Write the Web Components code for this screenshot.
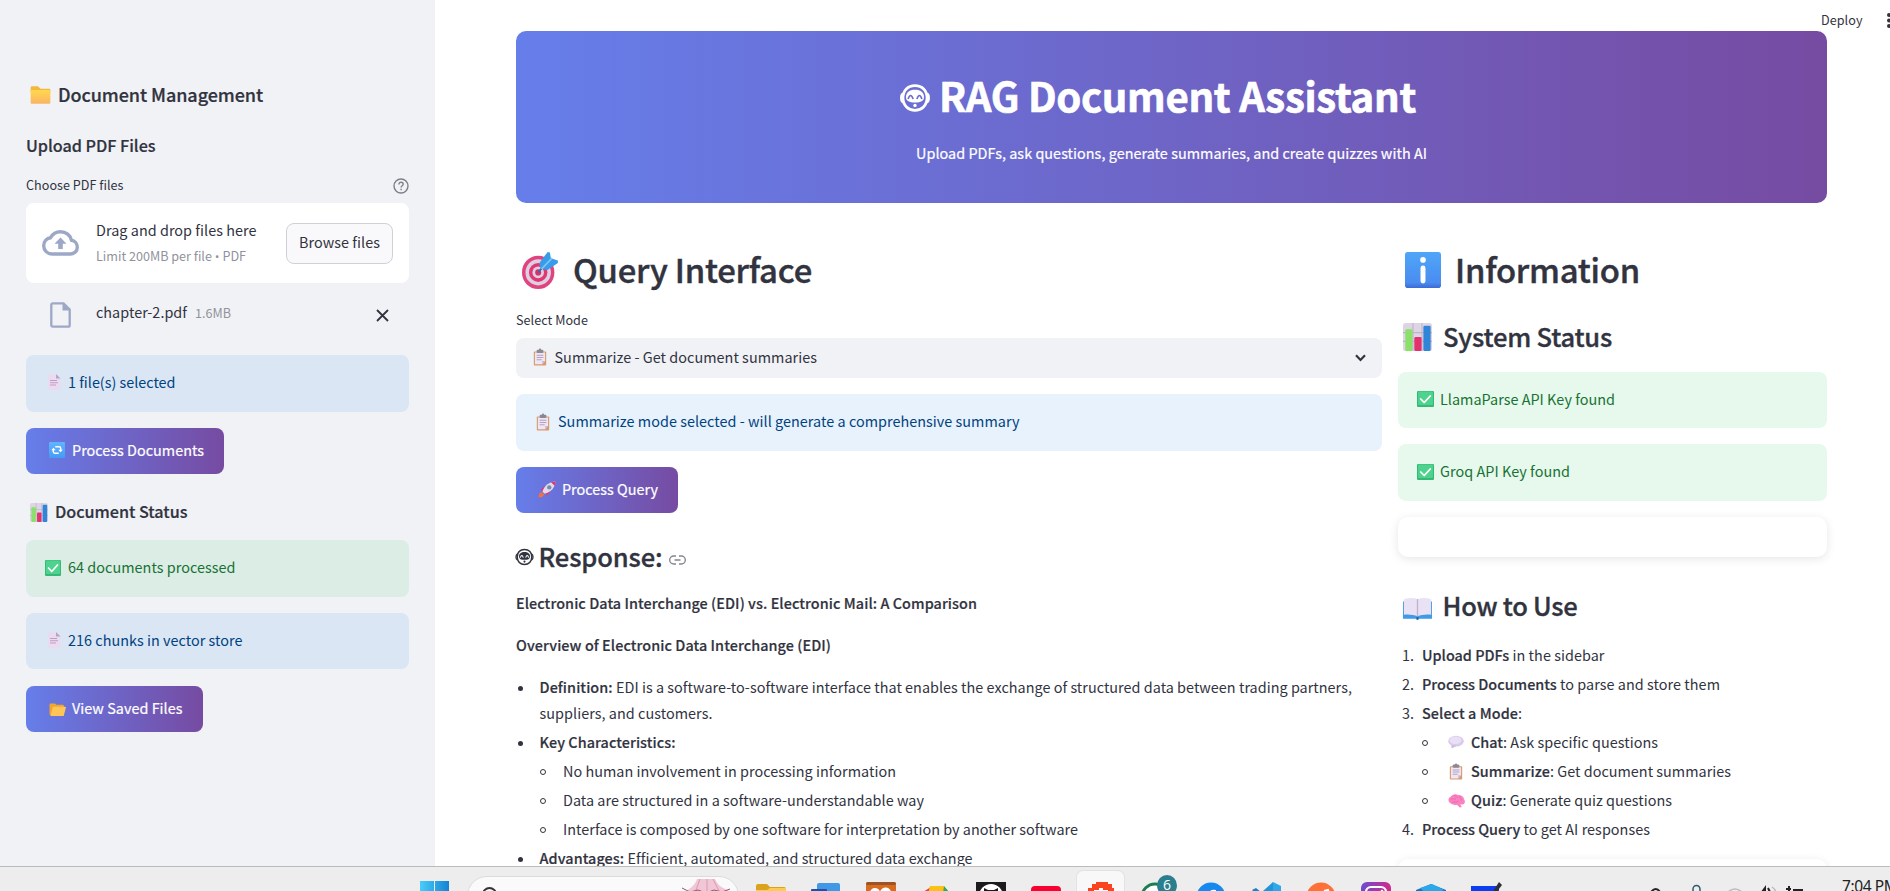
<!DOCTYPE html>
<html lang="en">
<head>
<meta charset="utf-8">
<title>RAG Document Assistant</title>
<style>
html,body{margin:0;height:100%;overflow:hidden;background:#fff}
</style>
</head>
<body>
<rag-app></rag-app>
<script>
const def = (name, css, html, ready) => customElements.define(name, class extends HTMLElement {
  constructor(){ super(); this.attachShadow({mode:'open'}); }
  connectedCallback(){
    if(this.done) return; this.done = true;
    const h = typeof html === 'function' ? html(this) : html;
    this.shadowRoot.innerHTML = `<style>:host{box-sizing:border-box}*{box-sizing:border-box}${css}</style>${h}`;
    if(ready) ready(this);
  }
});
const rows = `.r{display:flex;align-items:center;flex:none;white-space:nowrap}`;

/* text run: s = type size, w = advance width, b = weight */
def('fit-text', `:host{display:inline-block;flex:none;white-space:pre;line-height:1.3;padding-bottom:.13em}
:host([b="500"]){-webkit-text-stroke:.013em currentColor}:host([b="700"]){-webkit-text-stroke:.016em currentColor}`, '<slot></slot>', el => {
  const s = +(el.getAttribute('s') || 16);
  el.style.fontSize = s * (s > 20 ? .912 : .9) + 'px';
  if(el.hasAttribute('b')) el.style.fontWeight = el.getAttribute('b');
  const w = +el.getAttribute('w');
  if(w){
    const n = el.textContent.length, now = el.getBoundingClientRect().width;
    el.style.letterSpacing = ((w - now) / n).toFixed(3) + 'px';
  }
});

const board = `<rect x="5" y="6" width="22" height="25" rx="1.5" fill="#d99a6c"/><path d="M7 8h18v15l-5 6H7z" fill="#efe6f5"/><path d="M20 29v-6h5z" fill="#c9b3d3"/><rect x="10" y="3" width="12" height="6" rx="2" fill="#8d8794"/><rect x="14" y="1" width="4" height="4" rx="2" fill="#8d8794"/><path d="M10 13h12M10 17h12M10 21h9" stroke="#b3a3c0" stroke-width="1.8"/>`;
const icons = {
  folder:`<defs><linearGradient id="a" x2="0" y2="1"><stop stop-color="#ffd84d"/><stop offset="1" stop-color="#fbb463"/></linearGradient></defs><path d="M1 4a2 2 0 0 1 2-2h9l4 4h13a2 2 0 0 1 2 2v4H1z" fill="#f3b63f"/><rect x="1" y="8" width="30" height="22" rx="1.5" fill="url(#a)"/>`,
  open:`<path d="M1 5a2 2 0 0 1 2-2h8l3 3h12a2 2 0 0 1 2 2v20H3a2 2 0 0 1-2-2z" fill="#f2a62e"/><path d="M7 11a2 2 0 0 1 2-1h22a1 1 0 0 1 1 1l-4 17a2 2 0 0 1-2 2H3z" fill="#ffc657"/>`,
  page:`<path d="M4 0h16l9 9v23H4z" fill="#e9dcf0"/><path d="M20 0l9 9h-9z" fill="#b7a5c5"/><path d="M8 13h14M8 17.500h16M8 22h12" stroke="#c49ac9" stroke-width="2"/>`,
  cycle:`<defs><linearGradient id="b" x2="0" y2="1"><stop stop-color="#62b4ff"/><stop offset="1" stop-color="#459bf5"/></linearGradient></defs><rect width="32" height="32" rx="2" fill="url(#b)"/><path d="M12.500 9.500H20a3.500 3.500 0 0 1 3.500 3.500V17M19.500 22.500H12A3.500 3.500 0 0 1 8.500 19V15" fill="none" stroke="#fff" stroke-width="2.800"/><path d="M18.500 15.500h9l-4.500 5zM4.500 16.500h9L9 11.500z" fill="#fff"/>`,
  chart:`<rect x="0" y="0" width="32" height="32" rx="3" fill="#ddd5e4"/><path d="M0 11h32M0 21h32M11 0v32M21 0v32" stroke="#bfb3cc" stroke-width="1.200"/><rect x="2.500" y="7" width="8" height="25" rx="1.500" fill="#8be06a"/><rect x="12.500" y="16" width="8" height="16" rx="1.500" fill="#e2336f"/><rect x="22.500" y="3" width="8" height="29" rx="1.500" fill="#2f86d8"/>`,
  check:`<rect width="32" height="32" rx="2" fill="#36b877"/><rect x="2" y="1" width="28" height="27" rx="1.500" fill="#4ed38e"/><path d="M7 16l6.500 7L25 10" fill="none" stroke="#fff" stroke-width="3.400" stroke-linecap="round" stroke-linejoin="round"/>`,
  info:`<defs><linearGradient id="a" x2="0" y2="1"><stop stop-color="#4fa6f8"/><stop offset=".85" stop-color="#4a8cf0"/><stop offset="1" stop-color="#3b6bd6"/></linearGradient></defs><rect width="32" height="32" rx="2.500" fill="url(#a)"/><circle cx="16" cy="7" r="2.500" fill="#fff"/><rect x="13.800" y="12" width="4.400" height="16" rx="2.200" fill="#fff"/>`,
  target:`<circle cx="14" cy="18" r="14" fill="#e0447c"/><circle cx="14" cy="18" r="11" fill="#ddd0e6"/><circle cx="14" cy="18" r="8" fill="#e0386f"/><circle cx="14" cy="18" r="5" fill="#ddd0e6"/><circle cx="14" cy="18" r="2.600" fill="#d3336a"/><path d="M14 18L22 9" stroke="#356fa8" stroke-width="1.600"/><path d="M16 15l-1-5 7-9 2 0 1 5 6 2v2l-9 6z" fill="#399ce8"/><path d="M17 15l9-9" stroke="#7cc4f8" stroke-width="1.500"/>`,
  board,
  rocket:`<path d="M5 16l6-5h6l-7 9zM16 27l5-6v-6l-9 8z" fill="#e5356f"/><path d="M8 20C11 9 19 2 31 1c-1 12-8 20-19 23z" fill="#e2daea"/><path d="M23 2.500C25.500 1.500 28 1 31 1c0 3-.5 5.500-1.500 8z" fill="#e5356f"/><circle cx="20" cy="12" r="4" fill="#6f8fb0"/><path d="M1 31c0-6 1-9 6-10l4 4c-1 5-4 6-10 6z" fill="#ef7047"/>`,
  chat:`<ellipse cx="16" cy="14" rx="15.500" ry="12.500" fill="#d8caec"/><ellipse cx="15" cy="12" rx="12" ry="8.500" fill="#e9e0f5"/><path d="M7 23l0 8 10-6z" fill="#cbb9e2"/>`,
  brain:`<path d="M5 22C-1 19 0 10 5 8c2-5 10-7 14-4 6 0 11 4 11 9 3 5 2 9-1 11-2 1-4 0-6 0l3 6-4 1-5-6c-4 1-9 0-12-3z" fill="#fb82c0"/><path d="M5 14c4-4 6 1 10-2M12 4c0 4 6 3 7 7M23 7c-3 3 3 4 2 9M8 20c4-3 7 2 12-3" fill="none" stroke="#e55fa5" stroke-width="1.500"/>`,
  book:`<path d="M0 7h32v22H18l-2 2-2-2H0z" fill="#3f9be6"/><path d="M1 4c5-2 11-2 15 0 4-2 10-2 15 0v20c-5-1-11 0-15 2-4-2-10-3-15-2z" fill="#e9e2f4"/><path d="M16 4v22" stroke="#bfb2d2" stroke-width="1.500"/><path d="M15 27h2v3h-2z" fill="#23599b"/>`
};
def('emoji-icon', `:host{display:block;flex:none}svg{display:block;width:100%;height:100%}`, el => {
  el.style.width = el.getAttribute('w') + 'px'; el.style.height = (el.getAttribute('h') || el.getAttribute('w')) + 'px';
  return `<svg viewBox="0 0 32 32" preserveAspectRatio="none">${icons[el.getAttribute('name')]}</svg>`;
});
def('bot-icon', `:host{display:block;flex:none}svg{display:block;width:100%;height:100%}`, `<svg viewBox="0 0 31 28" fill="none" stroke="currentColor"><path d="M3.500 9.500C1 10.500.8 17 3.500 18.500M27.500 9.500C30 10.500 30.200 17 27.500 18.500" stroke-width="2"/><path d="M15.500 1.700c7.200 0 12 4.800 12 12.300s-5.400 12.300-12 12.300S3.500 21.500 3.500 14 8.300 1.700 15.500 1.700z" stroke-width="2.700"/><path d="M15.500 5.800c5.500 0 9 2.600 9 7.200 0 4.200-3.300 5.500-9 5.500s-9-1.300-9-5.500c0-4.600 3.500-7.200 9-7.200z" fill="currentColor" stroke="none"/><path d="M8.600 15q2.500-7 5 0M17.400 15q2.500-7 5 0" style="stroke:var(--eye)" stroke-width="1.700"/><circle cx="15.500" cy="21.500" r="1.700" fill="currentColor" stroke="none"/></svg>`);

def('alert-box', `:host{display:flex;align-items:center;flex:none;height:57px;border-radius:8px;padding-left:16px;white-space:nowrap;background:#e8f2fc;color:#004280}
:host([kind=good]){background:#e7f9ed;color:#177233}
:host([side]){background:#dae6f4}:host([side][kind=good]){background:#dcede6}`, '<slot></slot>');
def('grad-button', `:host{display:flex;align-items:center;flex:none;height:46px;border-radius:8px;color:#fff;-webkit-text-stroke:.2px currentColor;white-space:nowrap;background:linear-gradient(90deg,#667eea,#764ba2)}`, '<slot></slot>');
def('soft-card', `:host{display:block;flex:none;height:40px;border-radius:10px;background:#fff;box-shadow:0 2px 10px rgba(0,0,0,.1)}`, '');

def('side-bar', `:host{display:flex;flex-direction:column;width:435px;padding:81px 26px 0;background:#f0f2f6;overflow:hidden}${rows}
.drop{margin-top:5px;height:80px;border-radius:8px;background:#fff;padding:0 16px}
.txt{width:190px;margin-left:17px;display:flex;flex-direction:column;align-items:flex-start;gap:7px;padding-top:2px}
.lim{gap:3px;color:#91939b}
.dot{width:4px;height:4px;border-radius:50%;background:#91939b;margin-top:2px}
.btn{width:107px;height:41px;border:1px solid #d0d1d6;border-radius:8px;background:#f9f9fb;justify-content:center}
svg{display:block;flex:none}`, `
<div class="r" style="height:30px"><emoji-icon name="folder" w="21" h="20" style="margin:-3px 7px 0 4px"></emoji-icon><fit-text s="20" w="205" b="500">Document Management</fit-text></div>
<div class="r" style="height:30px;margin-top:21px"><fit-text s="18" w="129.500" b="500">Upload PDF Files</fit-text></div>
<div class="r" style="height:24px;margin-top:12px;justify-content:space-between"><fit-text s="14" w="97.500">Choose PDF files</fit-text><svg width="16" height="16" viewBox="0 0 16 16" fill="none" stroke="#7d8089" stroke-width="1.400"><circle cx="8" cy="8" r="7"/><path d="M5.900 6.400c0-3 4.300-2.700 4.300-.2 0 1.500-2.100 1.500-2.100 3.200M8.100 10.700v1.500"/></svg></div>
<div class="r drop"><svg width="37" height="26" viewBox="0 0 37 26"><path d="M29.500 10.300C28.500 5.300 24 1.700 18.500 1.700c-4.400 0-8 2.400-10 6C4.500 8.300 1.700 11.700 1.700 15.800c0 4.600 3.700 8.200 8.300 8.200h18.500c3.800 0 6.800-3 6.800-6.800 0-3.600-2.500-6.500-5.800-6.900z" fill="none" stroke="#9da8c6" stroke-width="3.400"/><path d="M18.500 7.500l6 6.200h-3.700v5.300h-4.600v-5.300h-3.700z" fill="#9da8c6"/></svg>
<div class="txt"><fit-text s="16" w="160.500">Drag and drop files here</fit-text><fit-text s="14" w="150" style="color:#91939b;font-family:'Noto Sans CJK SC'">Limit 200MB per file<span style="font-family:Roboto"> • </span>PDF</fit-text></div><div class="r btn"><fit-text s="16" w="81">Browse files</fit-text></div></div>
<div class="r" style="height:36px;margin-top:14px;padding:0 20px 0 24px"><svg width="21" height="26" viewBox="0 0 21 26"><path d="M2.800 1.300h10.700l6.200 6.200v15.700a1.500 1.500 0 0 1-1.500 1.500H2.800a1.500 1.500 0 0 1-1.500-1.500V2.800a1.500 1.500 0 0 1 1.500-1.500z" fill="none" stroke="#9da8c6" stroke-width="2.300"/><path d="M12.500 1v7.500H20z" fill="#9da8c6"/></svg><fit-text s="16" w="91" style="margin:-4px 8px 0 25px">chapter-2.pdf</fit-text><fit-text s="14" w="36" style="margin-top:-3px;color:#91939b">1.6MB</fit-text><svg width="13" height="13" viewBox="0 0 13 13" style="margin-left:auto" stroke="#31333f" stroke-width="1.800"><path d="M1 1l11 11M12 1L1 12"/></svg></div>
<alert-box side style="margin-top:22px"><emoji-icon name="page" w="16" style="margin:-3px 6px 0 4px"></emoji-icon><fit-text w="107.500">1 file(s) selected</fit-text></alert-box>
<grad-button style="margin-top:16px;width:198px"><emoji-icon name="cycle" w="16" style="margin:-2px 7px 0 23px"></emoji-icon><fit-text w="132">Process Documents</fit-text></grad-button>
<div class="r" style="height:30px;margin-top:24px"><emoji-icon name="chart" w="18" h="19" style="margin:-1px 7px 0 4px"></emoji-icon><fit-text s="18" w="132.500" b="500">Document Status</fit-text></div>
<alert-box side kind="good" style="margin-top:12px"><emoji-icon name="check" w="16" style="margin:-2px 7px 0 3px"></emoji-icon><fit-text w="167.500">64 documents processed</fit-text></alert-box>
<alert-box side style="margin-top:16px;height:56px"><emoji-icon name="page" w="16" style="margin:-3px 6px 0 4px"></emoji-icon><fit-text w="174.500">216 chunks in vector store</fit-text></alert-box>
<grad-button style="margin-top:17px;width:177px"><emoji-icon name="open" w="17" h="15" style="margin:0 6px 0 23px"></emoji-icon><fit-text w="110.500">View Saved Files</fit-text></grad-button>`);

def('hero-banner', `:host{display:flex;flex-direction:column;align-items:center;height:172px;border-radius:10px;background:linear-gradient(90deg,#667eea,#764ba2);color:#fff;--eye:#6c6dca}${rows}`, `
<div class="r" style="height:56px;margin:39px 28px 0 0"><bot-icon style="width:32px;height:28px;margin-right:8px"></bot-icon><fit-text s="44" w="477" b="700">RAG Document Assistant</fit-text></div>
<div class="r" style="height:26px;margin-top:15px"><fit-text s="16" w="511" style="-webkit-text-stroke:.2px #fff">Upload PDFs, ask questions, generate summaries, and create quizzes with AI</fit-text></div>`);

/* list row: marker slot width is set per nesting level */
def('list-row', `:host{display:flex;align-items:center;flex:none;height:26px;margin-top:3px;white-space:nowrap}
i{flex:none;width:5px;height:5px;border-radius:50%;background:#31333f;margin:0 16.500px 0 2px}
:host([sub]) i{background:none;border:1px solid #31333f;width:6px;height:6px;margin:0 17px 0 24px}
:host([sub=r]) i{margin:0 19px 0 24px}
b{flex:none;font-weight:400;font-size:14.400px;line-height:1.3;padding-bottom:.13em;width:20px;margin-left:4px}`, el => (el.hasAttribute('num') ? `<b>${el.getAttribute('num')}.</b>` : '<i></i>') + '<slot></slot>');

def('query-panel', `:host{display:flex;flex-direction:column;--eye:#fff}${rows}
.sel{height:40px;margin-top:7px;border-radius:8px;background:#f0f2f6;padding:0 16px 0 17px}svg{display:block;flex:none}`, `
<div class="r" style="height:40px;margin-top:48px"><emoji-icon name="target" w="37" h="38" style="margin:-3px 14px 0 6px"></emoji-icon><fit-text s="36" w="239" b="500">Query Interface</fit-text></div>
<div class="r" style="height:21px;margin-top:19px"><fit-text s="14" w="72">Select Mode</fit-text></div>
<div class="r sel"><emoji-icon name="board" w="18" style="margin:-2px 5.500px 0 -2px"></emoji-icon><fit-text w="262.500">Summarize - Get document summaries</fit-text><svg width="11" height="8" viewBox="0 0 11 8" style="margin-left:auto" fill="none" stroke="#31333f" stroke-width="2.200"><path d="M1 1.200l4.500 4.700L10 1.200"/></svg></div>
<alert-box style="margin-top:16px"><emoji-icon name="board" w="18" style="margin:-2px 6px 0 2px"></emoji-icon><fit-text w="461.500">Summarize mode selected - will generate a comprehensive summary</fit-text></alert-box>
<grad-button style="margin-top:16px;width:162px"><emoji-icon name="rocket" w="18" h="17" style="margin:-1px 6px 0 22px"></emoji-icon><fit-text w="96">Process Query</fit-text></grad-button>
<div class="r" style="height:36px;margin-top:26px"><bot-icon style="width:19px;height:18px;margin:0 4.500px 0 -1px"></bot-icon><fit-text s="28" w="124" b="500">Response:</fit-text><svg width="17" height="10" viewBox="0 0 17 10" style="margin:5px 0 0 6px" fill="none" stroke="#85878f" stroke-width="1.400"><path d="M7 1H4.700a4 4 0 0 0 0 8H7M10 1h2.300a4 4 0 0 1 0 8H10M5.500 5h6"/></svg></div>
<div class="r" style="height:26px;margin-top:16px"><fit-text w="461" b="500">Electronic Data Interchange (EDI) vs. Electronic Mail: A Comparison</fit-text></div>
<div class="r" style="height:26px;margin-top:16px"><fit-text w="315" b="500">Overview of Electronic Data Interchange (EDI)</fit-text></div>
<list-row style="margin-top:16px"><fit-text w="76.500" b="500">Definition: </fit-text><fit-text w="736">EDI is a software-to-software interface that enables the exchange of structured data between trading partners,</fit-text></list-row>
<div class="r" style="height:26px;padding-left:23.500px"><fit-text w="173">suppliers, and customers.</fit-text></div>
<list-row><fit-text w="136" b="500">Key Characteristics:</fit-text></list-row>
<list-row sub><fit-text w="333">No human involvement in processing information</fit-text></list-row>
<list-row sub><fit-text w="361">Data are structured in a software-understandable way</fit-text></list-row>
<list-row sub><fit-text w="515">Interface is composed by one software for interpretation by another software</fit-text></list-row>
<list-row><fit-text w="88" b="500">Advantages: </fit-text><fit-text w="345">Efficient, automated, and structured data exchange</fit-text></list-row>`);

def('info-panel', `:host{display:flex;flex-direction:column}${rows}`, `
<div class="r" style="height:40px;margin-top:48px"><emoji-icon name="info" w="36" style="margin:-2px 14px 0 7px"></emoji-icon><fit-text s="36" w="185" b="500">Information</fit-text></div>
<div class="r" style="height:36px;margin-top:28px"><emoji-icon name="chart" w="29" h="28" style="margin:0 11px 0 5px"></emoji-icon><fit-text s="28" w="169" b="500">System Status</fit-text></div>
<alert-box kind="good" style="margin-top:17px;height:56px"><emoji-icon name="check" w="17" h="16" style="margin:-2px 6px 0 3px"></emoji-icon><fit-text w="175">LlamaParse API Key found</fit-text></alert-box>
<alert-box kind="good" style="margin-top:16px"><emoji-icon name="check" w="17" h="16" style="margin:-2px 6px 0 3px"></emoji-icon><fit-text w="130">Groq API Key found</fit-text></alert-box>
<soft-card style="margin-top:16px"></soft-card>
<div class="r" style="height:36px;margin-top:31px"><emoji-icon name="book" w="29" h="25" style="margin:4px 10.500px 0 5px"></emoji-icon><fit-text s="28" w="135" b="500">How to Use</fit-text></div>
<list-row num="1" style="margin-top:19px"><fit-text w="90.500" b="500">Upload PDFs </fit-text><fit-text w="92">in the sidebar</fit-text></list-row>
<list-row num="2"><fit-text w="138" b="500">Process Documents </fit-text><fit-text w="160">to parse and store them</fit-text></list-row>
<list-row num="3"><fit-text w="96" b="500">Select a Mode</fit-text><fit-text w="4">:</fit-text></list-row>
<list-row sub="r"><emoji-icon name="chat" w="16" h="14" style="margin:-2px 7px 0 1px"></emoji-icon><fit-text w="32" b="500">Chat</fit-text><fit-text w="155">: Ask specific questions</fit-text></list-row>
<list-row sub="r"><emoji-icon name="board" w="18" h="17" style="margin:-2px 6px 0 0"></emoji-icon><fit-text w="79" b="500">Summarize</fit-text><fit-text w="181">: Get document summaries</fit-text></list-row>
<list-row sub="r"><emoji-icon name="brain" w="17" h="15" style="margin:-2px 6px 0 1px"></emoji-icon><fit-text w="31.500" b="500">Quiz</fit-text><fit-text w="169.500">: Generate quiz questions</fit-text></list-row>
<list-row num="4"><fit-text w="101.500" b="500">Process Query </fit-text><fit-text w="126.500">to get AI responses</fit-text></list-row>
<soft-card style="margin-top:16px"></soft-card>`);

const apps = [
 `<path d="M1 12a2 2 0 0 1 2-2h9l3 3h14a2 2 0 0 1 2 2v17H1z" fill="#dba21b"/><path d="M1 16h11l3-2h16v18H1z" fill="#fdcb50"/>`,
 `<rect x="7" y="9" width="23" height="23" rx="2" fill="#4098e6"/><path d="M7 17h23v15H7z" fill="#2b6fd0"/><rect x="1" y="15" width="16" height="17" rx="1" fill="#1d50a8"/>`,
 `<rect x="1" y="8" width="30" height="24" rx="3" fill="#d86b20"/><rect x="1" y="8" width="30" height="3" rx="1.500" fill="#9c5426"/><path d="M5 20a5 5 0 0 1 10-2 5 5 0 0 1 11 2v12H5z" fill="#fff"/><circle cx="11" cy="19" r="2" fill="#d86b20"/><circle cx="21" cy="19" r="2" fill="#d86b20"/>`,
 `<path d="M3 18l8-5 3 7-8 6z" fill="#e94335"/><path d="M10 12h14l5 8H8z" fill="#fbc116"/><path d="M24 12l6 7v8h-8z" fill="#34a853"/>`,
 `<rect x="1" y="8" width="30" height="24" fill="#1b1b1d"/><circle cx="16" cy="22" r="12" fill="#fff"/><path d="M9 14l4 2h6l4-2v16H9z" fill="#1b1b1d"/><path d="M12 20h8v4h-8z" fill="#fff"/>`,
 `<rect x="1" y="12" width="30" height="22" rx="4" fill="#f80032"/>`,
 `<path d="M7 10h4V8h12v2h4v4h2v8h-2v10H5V22H3v-8h4z" fill="#fb431d"/><path d="M9 14h14v18H9z" fill="#fff"/><path d="M9 14h5v2H9zM18 14h5v2h-5zM10 18h4v2h-4zM18 18h4v2h-4z" fill="#fb431d"/>`,
 `<circle cx="15" cy="23" r="13" fill="#fff" stroke="#1d7c50" stroke-width="3"/><path d="M10 19l4-2 2 5-3 2z" fill="#1d7c50"/>`,
 `<circle cx="16" cy="23" r="14.500" fill="#1689f0"/><path d="M14 32V20q0-5 7-4v3q-3-1-3 2v11z" fill="#fff"/>`,
 `<path d="M23 8l8 4v20h-8z" fill="#2ea8ea"/><path d="M2 16l4-2 17 14v4h-5z" fill="#1683c9"/><path d="M23 8v10L8 30l-5-4z" fill="#1f95dc"/>`,
 `<circle cx="16" cy="23" r="14.500" fill="#fd7137"/><path d="M14 26l9-10M19 17l4-1 1 3" stroke="#fff" stroke-width="2"/>`,
 `<defs><linearGradient id="g" x2="1"><stop stop-color="#6a4bd0"/><stop offset="1" stop-color="#d02a8c"/></linearGradient></defs><rect x="1" y="8" width="30" height="28" rx="6" fill="url(#g)"/><rect x="6" y="13" width="20" height="20" rx="5" fill="none" stroke="#fff" stroke-width="2.200"/><circle cx="16" cy="23" r="4.500" fill="none" stroke="#fff" stroke-width="2"/><circle cx="22" cy="17" r="1.300" fill="#fff"/>`,
 `<path d="M1 16l15-6 15 6v16H1z" fill="#1473c8"/><path d="M5 14l12-4 12 6-14 7z" fill="#29a9ea"/>`,
 `<rect x="1" y="12" width="28" height="20" fill="#0b3ef0"/><path d="M29 8l3 3-13 17-4 2z" fill="#2d3136"/>`
];
def('task-bar', `:host{display:flex;align-items:flex-start;height:25px;overflow:hidden;background:#ededed;border-top:1px solid #b9bbbc;position:relative}
svg{display:block;flex:none}
.pill{flex:none;width:272px;height:40px;margin:9px 4px 0 18px;border-radius:20px;background:#fafafa;border:1px solid #dcdcdc;display:flex;overflow:hidden;position:relative}
.app{flex:none;width:47px;height:40px;margin:4px 4px 0 4px;display:flex;justify-content:center;border-radius:6px}
.app.on{background:#f8f8f8;box-shadow:0 0 0 1px #e2e2e2}
.app svg{margin-top:2.500px}
.find{margin:9px 0 0 15px;font:15px "Open Sans",sans-serif;line-height:20px;color:#555;height:20px}
.badge{position:absolute;left:1157px;top:8px;width:20px;height:21px;border-radius:50%;background:#2a7f8e;color:#fff;font:14px/20px "Open Sans",sans-serif;text-align:center}
.time{font:15.500px/20px "Noto Sans",sans-serif;letter-spacing:-.4px;color:#222;white-space:nowrap;margin:9px 0 0 auto;width:48px}`, `
<svg width="29" height="12" viewBox="0 0 29 12" style="margin:14px 0 0 420px"><defs><linearGradient id="w" x2="1"><stop stop-color="#48cdfb"/><stop offset="1" stop-color="#1583d4"/></linearGradient></defs><path d="M0 0h14v12H0zM15 0h14v12H15z" fill="url(#w)"/></svg>
<div class="pill"><svg width="20" height="20" viewBox="0 0 20 20" style="margin:9px 0 0 13px" fill="none" stroke="#333" stroke-width="2"><circle cx="8.500" cy="8.500" r="6.500"/></svg><span class="find">Search</span>
<svg width="48" height="16" viewBox="0 0 48 16" style="margin:2px 8px 0 auto"><path d="M15 0h18c2 5 6 9 15 12l-5 3-7-3-6 3-7-3-7 3-7-3-9 3C7 10 13 7 15 0z" fill="#f1c6d5"/><path d="M18 0l-5 14M25 0v14M31 0l7 14" stroke="#d99ab3" fill="none"/><path d="M0 9l8 4 8-2 8 3 8-3 8 2 8-3" stroke="#8a5a70" fill="none"/></svg></div>
${apps.map((a,i)=>`<div class="app${i==6?' on':''}"><svg width="32" height="32" viewBox="0 0 32 32">${a}</svg></div>`).join('')}
<svg width="160" height="8" viewBox="0 0 160 8" style="margin:17px 0 0 136px" fill="none" stroke="#222" stroke-width="2"><path d="M2 8q5-6 9 0"/><path d="M44 8V5a3.500 3.500 0 0 1 7 0v3" stroke="#2c5c70" stroke-width="1.500"/><path d="M79 8q7-6 14 0" stroke="#bbb" stroke-width="1.500"/><path d="M113 8l3-4v4M119 4l2 4"/><path d="M123 3q3 2 4 5" stroke="#bbb" stroke-width="1.500"/><path d="M137 5h5M140 2v6M144 6h10"/></svg>
<div class="time">7:04 PM</div><span class="badge">6</span>`);

def('rag-app', `:host{display:grid;grid-template:866px 25px / 435px 1455px;width:1890px;height:891px;overflow:hidden;font-family:"Noto Sans CJK SC",sans-serif;color:#31333f}
main{overflow:hidden;padding-left:81px}
header{height:31px;display:flex;align-items:center;padding:11px 0 0 1305px}
.cols{display:grid;grid-template-columns:866px 429px;gap:16px}
hero-banner{width:1311px}
task-bar{grid-column:1/3}
svg{display:block;flex:none;margin-left:24.500px}`, `
<side-bar></side-bar>
<main><header><fit-text s="14" w="41.500">Deploy</fit-text><svg width="4" height="16" viewBox="0 0 4 16" fill="#31333f"><circle cx="2" cy="2" r="2"/><circle cx="2" cy="7.500" r="2"/><circle cx="2" cy="13" r="2"/></svg></header>
<hero-banner></hero-banner><div class="cols"><query-panel></query-panel><info-panel></info-panel></div></main>
<task-bar></task-bar>`);
</script>
</body>
</html>
